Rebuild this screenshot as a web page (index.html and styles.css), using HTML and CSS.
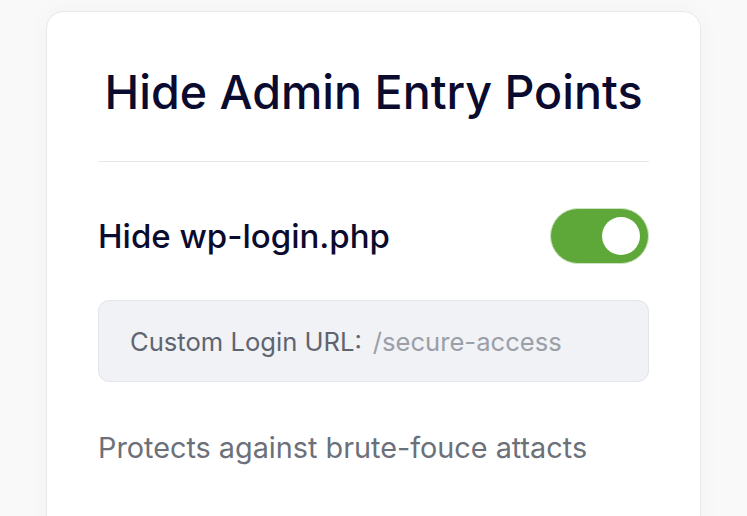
FILE: index.html
```html
<!DOCTYPE html>
<html lang="en">
<head>
<meta charset="utf-8">
<title>Hide Admin Entry Points</title>
<link rel="stylesheet" href="styles.css">
</head>
<body>
<div class="page">
  <section class="card">
    <h1 class="title">Hide Admin Entry Points</h1>
    <hr class="divider">
    <div class="row">
      <span class="label">Hide wp-login.php</span>
      <span class="toggle"><span class="knob"></span></span>
    </div>
    <div class="field">
      <span class="field-label">Custom Login URL:</span>
      <span class="field-value">/secure-access</span>
    </div>
    <p class="note">Protects against brute-fouce attacts</p>
  </section>
</div>
</body>
</html>
```
FILE: styles.css
```css
html, body {
  margin: 0;
  padding: 0;
  background: #f9f9fa;
  font-family: Inter, "Noto Sans", "Liberation Sans", sans-serif;
}
.page {
  padding: 11px 46px 0;
  height: 516px;
  box-sizing: border-box;
  overflow: hidden;
}
.card {
  box-sizing: border-box;
  width: 655px;
  height: 530px;
  background: #ffffff;
  border: 1px solid #e8e8ec;
  border-radius: 18px;
  box-shadow: 0 0 24px rgba(0, 0, 0, 0.035);
  padding: 0 51px;
}
.title {
  margin: 0;
  padding-top: 52px;
  text-align: center;
  font-size: 46.6px;
  line-height: 56px;
  font-weight: 500;
  color: #0a0b2e;
}
.divider {
  border: 0;
  height: 1px;
  background: #e6e8ec;
  margin: 41px 0 0;
}
.row {
  display: flex;
  align-items: center;
  justify-content: space-between;
  margin-top: 46px;
}
.label {
  font-size: 33px;
  line-height: 40px;
  font-weight: 500;
  color: #0a0b2e;
}
.toggle {
  box-sizing: border-box;
  width: 99px;
  height: 56px;
  border-radius: 28px;
  background: #5ea83a;
  border: 1px solid #cfe3c4;
  display: flex;
  align-items: center;
  justify-content: flex-end;
  padding-right: 8px;
}
.knob {
  width: 38px;
  height: 38px;
  border-radius: 50%;
  background: #ffffff;
}
.field {
  box-sizing: border-box;
  margin-top: 36px;
  height: 82px;
  background: #f1f2f5;
  border: 1px solid #e3e5ea;
  border-radius: 11px;
  display: flex;
  align-items: center;
  gap: 11px;
  padding-left: 31px;
  font-size: 25.6px;
}
.field-label {
  color: #5f6570;
}
.field-value {
  color: #9a9fa8;
}
.note {
  margin: 48px 0 0;
  font-size: 28.8px;
  line-height: 35px;
  color: #6b7079;
}
```
